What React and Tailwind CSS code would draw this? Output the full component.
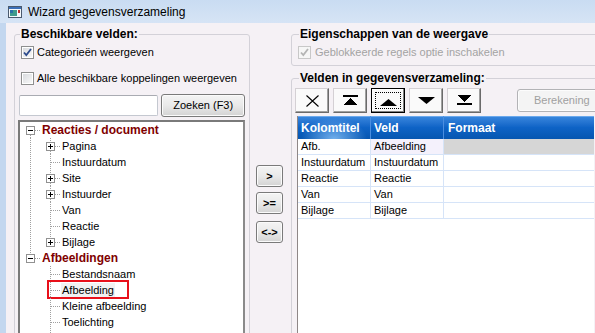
import React from 'react';

const dot = { stroke: '#a0a0a0', strokeWidth: 1, strokeDasharray: '1 1', shapeRendering: 'crispEdges' };

function Conn({ v, box, h }) {
  const topEnd = box ? 4 : 8;
  const botStart = box ? 13 : 8;
  return (
    <svg width="20" height="16" className="block shrink-0">
      {v === 'full' && !box && <line x1="10.5" y1="0" x2="10.5" y2="16" style={dot} />}
      {(v === 'top' || (v === 'full' && box)) && <line x1="10.5" y1="0" x2="10.5" y2={topEnd} style={dot} />}
      {(v === 'bottom' || (v === 'full' && box)) && <line x1="10.5" y1={botStart} x2="10.5" y2="16" style={dot} />}
      {h && <line x1={box ? 15 : 11} y1="8.5" x2="20" y2="8.5" style={dot} />}
      {box && (
        <g shapeRendering="crispEdges">
          <rect x="6.5" y="4.5" width="8" height="8" fill="#fff" stroke="#919191" />
          <line x1="8" y1="8.5" x2="13" y2="8.5" stroke="#000" />
          {box === '+' && <line x1="10.5" y1="6" x2="10.5" y2="11" stroke="#000" />}
        </g>
      )}
    </svg>
  );
}

function Check({ checked, disabled }) {
  return (
    <span
      className={
        disabled
          ? 'w-[13px] h-[13px] shrink-0 border border-[#c8c8c8] bg-[#f6f6f6] flex items-center justify-center'
          : 'w-[13px] h-[13px] shrink-0 border border-[#8e8f8f] bg-linear-to-br from-[#d6d8dc] to-[#fbfbfb] shadow-[inset_0_0_0_1px_#ffffff] flex items-center justify-center'
      }
    >
      {checked && (
        <svg width="11" height="11" viewBox="0 0 11 11">
          <path d="M2 5.5 L4.3 8 L9 2" fill="none" stroke={disabled ? '#b4b4b4' : '#2c4a8c'} strokeWidth="1.8" />
        </svg>
      )}
    </span>
  );
}

const tree = [
  { t: 'Reacties / document', root: true, a: { v: 'bottom', box: '-', h: true } },
  { t: 'Pagina', a: { v: 'full' }, b: { v: 'full', box: '+', h: true } },
  { t: 'Instuurdatum', a: { v: 'full' }, b: { v: 'full', h: true } },
  { t: 'Site', a: { v: 'full' }, b: { v: 'full', box: '+', h: true } },
  { t: 'Instuurder', a: { v: 'full' }, b: { v: 'full', box: '+', h: true } },
  { t: 'Van', a: { v: 'full' }, b: { v: 'full', h: true } },
  { t: 'Reactie', a: { v: 'full' }, b: { v: 'full', h: true } },
  { t: 'Bijlage', a: { v: 'full' }, b: { v: 'top', box: '+', h: true } },
  { t: 'Afbeeldingen', root: true, a: { v: 'top', box: '-', h: true } },
  { t: 'Bestandsnaam', b: { v: 'full', h: true } },
  { t: 'Afbeelding', b: { v: 'full', h: true }, mark: true },
  { t: 'Kleine afbeelding', b: { v: 'full', h: true } },
  { t: 'Toelichting', b: { v: 'full', h: true } },
  { t: '', b: { v: 'full', h: true } },
];

const gridRows = [
  ['Afb.', 'Afbeelding'],
  ['Instuurdatum', 'Instuurdatum'],
  ['Reactie', 'Reactie'],
  ['Van', 'Van'],
  ['Bijlage', 'Bijlage'],
];

function ToolBtn({ children, focus }) {
  return (
    <div
      className={
        focus
          ? 'w-[34px] h-[25px] border border-[#000000] bg-[#fafafa] shadow-[inset_-1px_-1px_0_#808080,inset_1px_1px_0_#ffffff] flex items-center justify-center p-[3px]'
          : 'w-[34px] h-[25px] border border-[#d4d0d4] border-r-[#6a6a6a] border-b-[#6a6a6a] bg-[#fafafa] shadow-[inset_-1px_-1px_0_#a0a0a0] flex items-center justify-center'
      }
    >
      {focus ? (
        <div className="w-full h-full border border-dotted border-[#000000] flex items-center justify-center">{children}</div>
      ) : (
        children
      )}
    </div>
  );
}

function VistaBtn({ children, className }) {
  return (
    <div
      className={
        'border border-[#7a7a7a] rounded-[3px] bg-linear-to-b from-[#f4f4f4] via-[#e9e9e9] to-[#d3d3d3] shadow-[inset_0_0_0_1px_#fbfbfb] flex items-center justify-center text-black ' +
        className
      }
    >
      {children}
    </div>
  );
}

export default function App() {
  return (
    <div className="w-[595px] h-[333px] overflow-hidden bg-[#c3d7ef] flex flex-col font-['Liberation_Sans',Arial,sans-serif] text-black select-none">
      {/* Title bar */}
      <div className="h-[23px] shrink-0 flex items-center pl-[8px] gap-[6px] bg-linear-to-b from-[#c9dcf2] to-[#d6e4f5]">
        <svg width="14" height="12" viewBox="0 0 14 12" className="shrink-0" shapeRendering="crispEdges">
          <rect x="0.5" y="0.5" width="13" height="11" fill="#f4f8fc" stroke="#4a5a6e" />
          <rect x="1" y="1" width="12" height="2" fill="#3b6fb8" />
          <rect x="2" y="4" width="7" height="6" fill="#3f9a8c" />
          <rect x="2" y="4" width="3" height="3" fill="#2a6fa8" />
          <rect x="10" y="4" width="2" height="3" fill="#c03030" />
        </svg>
        <span className="text-[12px] leading-[14px] pt-[1px]">Wizard gegevensverzameling</span>
      </div>

      {/* Body */}
      <div className="flex-1 ml-[6px] bg-[#f5f1f5] flex items-start pt-[5px] pl-[8px] overflow-hidden">
        {/* Left group */}
        <fieldset className="w-[236px] h-[320px] shrink-0 border border-[#d3d1d8] rounded-[3px] px-[4px] min-w-0">
          <legend className="ml-[1px] px-[1px] font-bold text-[12px] leading-[13px]">Beschikbare velden:</legend>
          <div className="mt-[5px] ml-[2px] flex items-center gap-[3px] h-[13px]">
            <Check checked />
            <span className="text-[11px] leading-[13px]">Categorieën weergeven</span>
          </div>
          <div className="mt-[13px] ml-[2px] flex items-center gap-[3px] h-[13px]">
            <Check />
            <span className="text-[11px] leading-[13px]">Alle beschikbare koppelingen weergeven</span>
          </div>
          <div className="mt-[9px] flex items-center h-[23px]">
            <div className="w-[140px] h-[21px] bg-white border border-[#c4c8d0] border-t-[#a9abb2] rounded-[2px]" />
            <VistaBtn className="ml-[3px] w-[84px] h-[23px] text-[11px]">Zoeken (F3)</VistaBtn>
          </div>
          <div className="mt-[3px] -ml-[1px] w-[227px] h-[230px] bg-white border-2 border-[#8a8a8a] border-l-[#7a7a7a] border-t-[#7a7a7a] overflow-hidden">
            {tree.map((r, i) => (
              <div key={i} className="relative h-[16px] flex items-center">
                {r.a ? <Conn {...r.a} /> : <div className="w-[20px] shrink-0" />}
                {!r.root && (r.b ? <Conn {...r.b} /> : <div className="w-[20px] shrink-0" />)}
                {r.root ? (
                  <span className="ml-[2px] font-bold text-[12px] leading-[16px] text-[#800000] whitespace-nowrap">{r.t}</span>
                ) : r.mark ? (
                  <span className="ml-[1px] px-[1px] bg-[#f1f1f1] text-[11px] leading-[15px] whitespace-nowrap">{r.t}</span>
                ) : (
                  <span className="ml-[2px] text-[11px] leading-[16px] whitespace-nowrap">{r.t}</span>
                )}
                {r.mark && (
                  <div className="absolute left-[27px] top-[-2px] w-[82px] h-[19px] border-2 border-[#e8101a] pointer-events-none" />
                )}
              </div>
            ))}
          </div>
        </fieldset>

        {/* Middle buttons */}
        <div className="w-[41px] shrink-0 flex flex-col pl-[6px] pt-[137px]">
          <VistaBtn className="w-[27px] h-[22px] text-[11px] font-bold">&gt;</VistaBtn>
          <VistaBtn className="mt-[5px] w-[27px] h-[22px] text-[11px] font-bold">&gt;=</VistaBtn>
          <VistaBtn className="mt-[7px] w-[27px] h-[22px] text-[11px] font-bold">&lt;-&gt;</VistaBtn>
        </div>

        {/* Right column */}
        <div className="w-[312px] shrink-0 flex flex-col">
          <fieldset className="h-[38px] border border-[#d3d1d8] rounded-[3px] px-[6px] min-w-0">
            <legend className="ml-[1px] px-[1px] font-bold text-[12px] leading-[13px]">Eigenschappen van de weergave</legend>
            <div className="mt-[5px] flex items-center gap-[4px] h-[13px]">
              <Check checked disabled />
              <span className="text-[11px] leading-[13px] text-[#a3a3a3]">Geblokkeerde regels optie inschakelen</span>
            </div>
          </fieldset>

          <fieldset className="mt-[6px] h-[300px] border border-[#d3d1d8] rounded-[3px] px-[3px] min-w-0">
            <legend className="ml-[4px] px-[1px] font-bold text-[12px] leading-[13px]">Velden in gegevensverzameling:</legend>
            <div className="mt-[3px] flex items-start h-[25px]">
              <div className="flex gap-[4px]">
                <ToolBtn>
                  <svg width="13" height="12" viewBox="0 0 13 12">
                    <path d="M0.5 0.5 L12.5 11.5 M12.5 0.5 L0.5 11.5" stroke="#000" strokeWidth="1.1" fill="none" />
                  </svg>
                </ToolBtn>
                <ToolBtn>
                  <svg width="15" height="11" viewBox="0 0 15 11" shapeRendering="crispEdges">
                    <rect x="0" y="0" width="15" height="2" fill="#000" />
                    <polygon points="7.5,3 15,10 0,10" fill="#000" />
                  </svg>
                </ToolBtn>
                <ToolBtn focus>
                  <svg width="17" height="7" viewBox="0 0 17 7" className="mt-[3px]">
                    <polygon points="8.5,0 17,7 0,7" fill="#000" />
                  </svg>
                </ToolBtn>
                <ToolBtn>
                  <svg width="17" height="7" viewBox="0 0 17 7">
                    <polygon points="0,0 17,0 8.5,7" fill="#000" />
                  </svg>
                </ToolBtn>
                <ToolBtn>
                  <svg width="15" height="11" viewBox="0 0 15 11" shapeRendering="crispEdges">
                    <polygon points="0,0 15,0 7.5,7" fill="#000" />
                    <rect x="0" y="8" width="15" height="2" fill="#000" />
                  </svg>
                </ToolBtn>
              </div>
              <div className="ml-[36px] mt-[1px] w-[90px] h-[23px] border border-[#b3b3b6] rounded-[3px] bg-[#f4f4f4] shadow-[inset_0_0_0_1px_#fcfcfc] flex items-center pl-[16px] text-[11px] text-[#a0a0a0]">
                Berekening
              </div>
            </div>

            {/* Grid */}
            <div className="mt-[3px] ml-[2px] w-[297px] h-[230px] bg-white border-l border-[#8e8787]">
              <div className="flex h-[23px] bg-linear-to-b from-[#3a88de] via-[#0e63c6] to-[#0656b0] text-white font-bold text-[12px] shadow-[inset_0_1px_0_#6aa8ec]">
                <div className="w-[73px] shrink-0 border-r border-[#4b8ee0] pl-[3px] flex items-center bg-[radial-gradient(ellipse_at_50%_100%,rgba(150,205,255,0.75),rgba(150,205,255,0)_65%)]">
                  Kolomtitel
                </div>
                <div className="w-[73px] shrink-0 border-r border-[#4b8ee0] pl-[3px] flex items-center">Veld</div>
                <div className="flex-1 pl-[4px] flex items-center">Formaat</div>
              </div>
              {gridRows.map((r, i) => (
                <div key={i} className="flex h-[16px] border-b border-[#d6e4f8] text-[11px] leading-[15px]">
                  <div className="w-[73px] shrink-0 border-r border-[#d6e4f8] pl-[3px] whitespace-nowrap overflow-hidden">{r[0]}</div>
                  <div
                    className={
                      i === 0
                        ? 'w-[73px] shrink-0 border-r border-[#d6e4f8] pl-[3px] bg-[#f4f1fc] whitespace-nowrap overflow-hidden'
                        : 'w-[73px] shrink-0 border-r border-[#d6e4f8] pl-[3px] whitespace-nowrap overflow-hidden'
                    }
                  >
                    {r[1]}
                  </div>
                  <div className={i === 0 ? 'flex-1 bg-[#d6d6d6]' : 'flex-1'} />
                </div>
              ))}
            </div>
          </fieldset>
        </div>
      </div>
    </div>
  );
}
